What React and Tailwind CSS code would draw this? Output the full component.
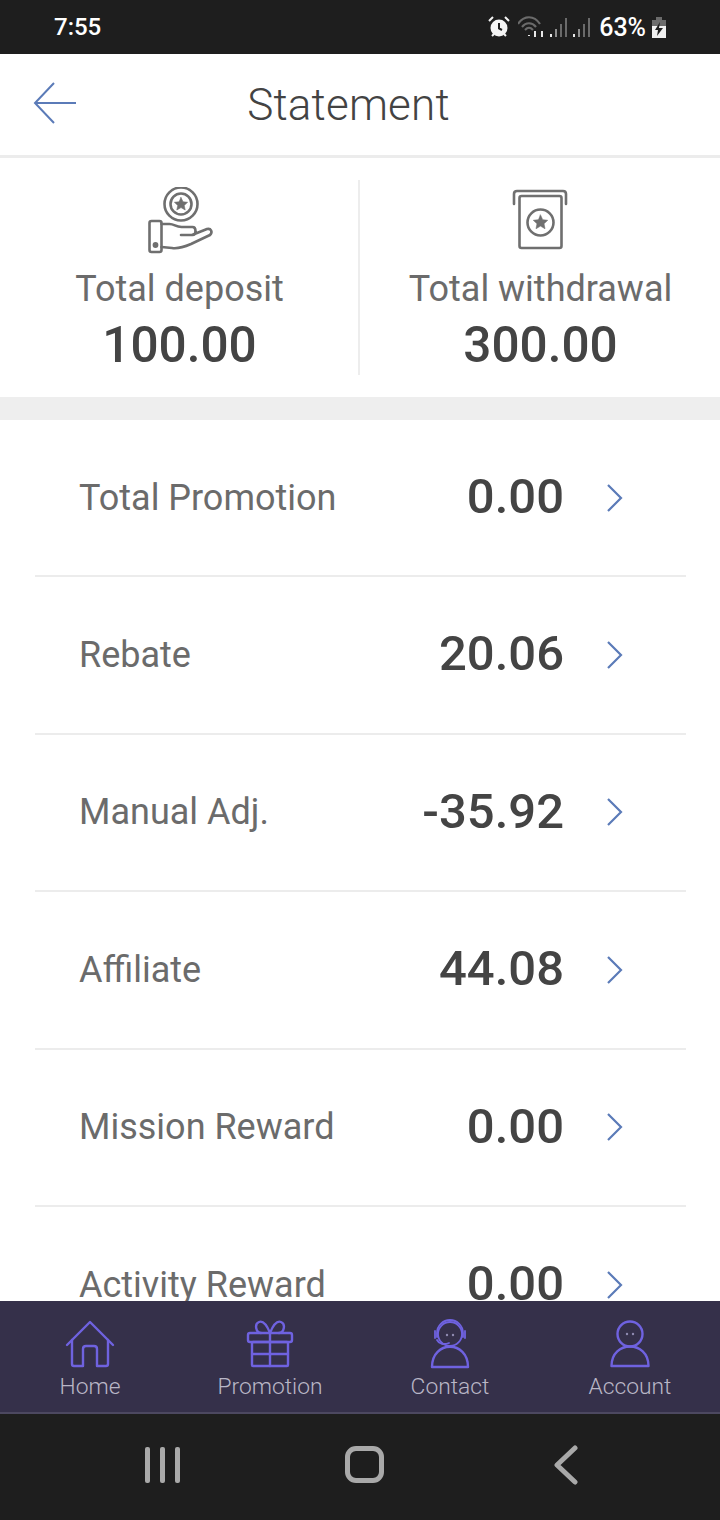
const rows = [
  { label: "Total Promotion", value: "0.00" },
  { label: "Rebate", value: "20.06" },
  { label: "Manual Adj.", value: "-35.92" },
  { label: "Affiliate", value: "44.08" },
  { label: "Mission Reward", value: "0.00" },
  { label: "Activity Reward", value: "0.00" },
];

function SignalBars() {
  return (
    <svg width="20" height="24" viewBox="0 0 20 24" fill="none" strokeWidth="2">
      <path d="M2 19v3" stroke="#e8e8e8" />
      <path d="M7 14v8" stroke="#8f8f8f" />
      <path d="M12 9v13" stroke="#6a6a6a" />
      <path d="M17 3v19" stroke="#6a6a6a" />
    </svg>
  );
}

function StatusBar() {
  return (
    <div className="flex h-[54px] shrink-0 items-center justify-between bg-[#1e1e1e] pl-[54px] pr-[53px] text-white">
      <span className="text-[24px] font-medium leading-none">7:55</span>
      <div className="flex items-center">
        <svg width="24" height="24" viewBox="0 0 24 24" className="mr-[7px]">
          <circle cx="12" cy="13" r="8.5" fill="#f4f4f4" />
          <path d="M12 8v5.5l3 1.5" stroke="#1e1e1e" strokeWidth="2" fill="none" />
          <path d="M2 6l4-4M22 6l-4-4M5 21l2-2M19 21l-2-2" stroke="#f4f4f4" strokeWidth="2" />
        </svg>
        <svg width="28" height="24" viewBox="0 0 28 24" fill="none" className="mr-[3px]">
          <path d="M0 9c6-9 16-9 22 0M4 12c4-5 10-5 14 0M7 15c3-3 5-3 8 0" stroke="#6b6b6b" strokeWidth="2.2" />
          <path d="M11 20v1M17 16v6M24 16v6" stroke="#e8e8e8" strokeWidth="2" />
        </svg>
        <SignalBars />
        <div className="w-[3px]" />
        <SignalBars />
        <span className="ml-[7px] mr-[5px] text-[25px] font-medium leading-none">63%</span>
        <svg width="16" height="24" viewBox="0 0 16 24">
          <path d="M5 2h6v3h4v18H1V5h4z" fill="#6b6b6b" />
          <path d="M1 11h14v12H1z" fill="#f0f0f0" />
          <path d="M9 7l-5 8h3l-1 6 6-8H8z" fill="#1e1e1e" />
        </svg>
      </div>
    </div>
  );
}

function Stat({ label, value, children }) {
  return (
    <div className="flex flex-1 flex-col items-center">
      {children}
      <div className="mt-[11px] text-[36px] leading-[46px] text-[#6b6b6b]">{label}</div>
      <div className="text-[49.500px] font-medium leading-[66px] text-[#444444]">{value}</div>
    </div>
  );
}

function TabItem({ label, children }) {
  return (
    <div className="flex flex-1 flex-col items-center">
      <svg width="56" height="56" viewBox="0 0 56 56" fill="none" stroke="#6f62e0" strokeWidth="2.4" strokeLinejoin="round" strokeLinecap="round">
        {children}
      </svg>
      <span className="mt-[-1px] text-[22.800px] font-light leading-[32px] text-[#b9b6c6]">{label}</span>
    </div>
  );
}

export default function App() {
  return (
    <div
      className="flex h-[1520px] w-[720px] flex-col overflow-hidden bg-white"
      style={{ fontFamily: "Roboto, sans-serif" }}
    >
      <StatusBar />

      <div className="relative flex h-[104px] shrink-0 items-center justify-center border-b-[3px] border-[#ececec]">
        <svg width="44" height="42" viewBox="0 0 44 42" fill="none" stroke="#5b7bb8" strokeWidth="2" className="absolute left-[33px] top-[28px]">
          <path d="M21 1L2 21l19 20M2 21h41" />
        </svg>
        <span className="mr-[23px] text-[44px] font-light leading-none tracking-[0.2px] text-[#434343]">Statement</span>
      </div>

      <div className="flex h-[239px] shrink-0 items-start pt-[29px]">
        <Stat label="Total deposit" value="100.00">
          <svg width="68" height="68" viewBox="0 0 68 68" fill="none" stroke="#6f6f6f" strokeWidth="2.6" strokeLinejoin="round" strokeLinecap="round">
            <circle cx="35" cy="17" r="16.5" />
            <circle cx="35" cy="17" r="10.5" />
            <path d="M35 10.5l2 4.3 4.6.5-3.4 3.1 1 4.6-4.2-2.4-4.2 2.4 1-4.6-3.4-3.1 4.6-.5z" fill="#6f6f6f" strokeWidth="0.6" />
            <rect x="3.5" y="34" width="12" height="31" rx="2" />
            <circle cx="9.5" cy="58" r="1.6" fill="#6f6f6f" />
            <path d="M15.5 37h8c5 0 6 3 12 3h11c4 0 4 8 0 8H35M46 48l15-6c4-1 6 3 3 6l-19 9c-7 3-13 5-19 4l-10.500-1" />
          </svg>
        </Stat>
        <div className="mt-[-7px] h-[195px] w-[2px] -translate-x-px bg-[#ededed]" />
        <Stat label="Total withdrawal" value="300.00">
          <svg width="68" height="68" viewBox="0 0 68 68" fill="none" stroke="#6f6f6f" strokeWidth="2.6" strokeLinejoin="round" strokeLinecap="round">
            <path d="M7 17V7c0-2 1-3 3-3h46c2 0 3 1 3 3v10" />
            <rect x="12.500" y="9" width="42" height="52" rx="2" />
            <circle cx="33.500" cy="35.500" r="13" />
            <path d="M33.500 28l2.200 4.700 5 .6-3.700 3.400 1 5-4.500-2.600-4.500 2.600 1-5-3.700-3.400 5-.6z" fill="#6f6f6f" strokeWidth="0.6" />
          </svg>
        </Stat>
      </div>

      <div className="h-[23px] shrink-0 bg-[#eeeeee]" />

      <div className="min-h-0 flex-1 overflow-hidden pl-[35px] pr-[34px]">
        {rows.map((row) => (
          <div key={row.label} className="flex h-[157.4px] shrink-0 items-center border-b-2 border-[#ececec] pl-[44px] pr-[62px]">
            <span className="flex-1 text-[36px] text-[#6b6b6b]">{row.label}</span>
            <span className="mt-[-2px] text-[49px] font-medium text-[#444444]">{row.value}</span>
            <svg width="18" height="30" viewBox="0 0 18 30" fill="none" stroke="#5b7bb8" strokeWidth="2.2" className="ml-[42px]">
              <path d="M2 2l13 13L2 28" />
            </svg>
          </div>
        ))}
      </div>

      <div className="flex h-[113px] shrink-0 items-start border-b-2 border-[#4c4860] bg-[#35304a] pt-[15px]">
        <TabItem label="Home">
          <path d="M5 29L28 6l23 23" />
          <path d="M10 24v24c0 1 1 2 2 2h9V33c0-2 1-3 3-3h8c2 0 3 1 3 3v17h9c1 0 2-1 2-2V24" />
        </TabItem>
        <TabItem label="Promotion">
          <rect x="6" y="17" width="44" height="9" rx="2" />
          <rect x="10" y="26" width="36" height="24" rx="1" />
          <path d="M28 17v33M10 38h36" />
          <path d="M28 17c-2-5-6-13-11-11s-3 11 2 11M28 17c2-5 6-13 11-11s3 11-2 11" />
        </TabItem>
        <TabItem label="Contact">
          <g strokeWidth="1.8">
            <circle cx="28" cy="18" r="12" />
            <path d="M15 21v-4a13 13 0 0 1 26 0v4M13 15v7M43 15v7M15 24c2 4 7 5 12 3" />
          </g>
          <path d="M10 51c0-27 36-27 36 0z" />
          <path d="M25 19v.1M31 19v.1" stroke="#8f8ab0" />
        </TabItem>
        <TabItem label="Account">
          <circle cx="28" cy="18" r="12.5" />
          <path d="M9.500 50c0-26 37-26 37 0z" />
          <path d="M25 18v.1M31 18v.1" stroke="#8f8ab0" />
        </TabItem>
      </div>

      <div className="flex h-[106px] shrink-0 items-center bg-[#1e1e1e] pb-[5px] pl-[144px]">
        <svg width="38" height="38" viewBox="0 0 38 38" fill="#a9a9a9">
          <rect x="1" y="1" width="5" height="36" rx="2" />
          <rect x="16" y="1" width="5" height="36" rx="2" />
          <rect x="31" y="1" width="5" height="36" rx="2" />
        </svg>
        <div className="ml-[163px] h-[37px] w-[39px] rounded-[11px] border-[5px] border-[#a9a9a9]" />
        <svg width="26" height="40" viewBox="0 0 26 40" fill="none" stroke="#a9a9a9" strokeWidth="5" strokeLinecap="round" strokeLinejoin="round" className="ml-[169px]">
          <path d="M22 3L4 20l18 17" />
        </svg>
      </div>
    </div>
  );
}
